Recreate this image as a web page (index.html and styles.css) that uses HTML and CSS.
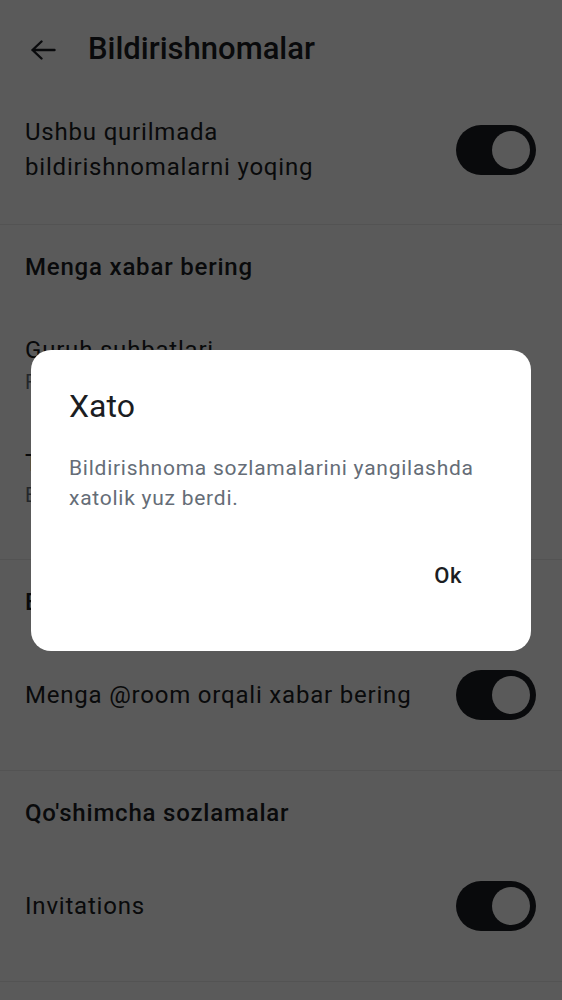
FILE: index.html
```html
<!DOCTYPE html>
<html lang="uz">
<head>
<meta charset="utf-8">
<title>Bildirishnomalar</title>
<link rel="stylesheet" href="styles.css">
</head>
<body>
<div class="page">
  <header class="topbar">
    <span class="back">
      <svg width="26" height="20" viewBox="0 0 26 20" aria-hidden="true">
        <path d="M2.5 10H24.5M11.5 1.5L2.5 10L11.5 18.5" fill="none" stroke="#1b1d22" stroke-width="2.4" stroke-linecap="round" stroke-linejoin="round"/>
      </svg>
    </span>
    <h1 class="title">Bildirishnomalar</h1>
  </header>

  <section class="section first">
    <div class="row">
      <div class="row-text two-line">Ushbu qurilmada<br>bildirishnomalarni yoqing</div>
      <span class="switch"><span class="thumb"></span></span>
    </div>
  </section>

  <section class="section">
    <div class="section-title">Menga xabar bering</div>
    <div class="item">
      <div class="item-title">Guruh suhbatlari</div>
      <div class="item-sub">Faqat eslatmalar va kalit so'zlar</div>
    </div>
    <div class="item">
      <div class="item-title">To'g'ridan-to'g'ri suhbatlar</div>
      <div class="item-sub">Barcha xabarlar</div>
    </div>
  </section>

  <section class="section">
    <div class="section-title">Belgilashlar</div>
    <div class="row">
      <div class="row-text">Menga @room orqali xabar bering</div>
      <span class="switch"><span class="thumb"></span></span>
    </div>
  </section>

  <section class="section">
    <div class="section-title">Qo'shimcha sozlamalar</div>
    <div class="row">
      <div class="row-text">Invitations</div>
      <span class="switch"><span class="thumb"></span></span>
    </div>
  </section>
</div>

<div class="scrim">
  <div class="dialog" role="alertdialog">
    <h2 class="dialog-title">Xato</h2>
    <p class="dialog-body">Bildirishnoma sozlamalarini yangilashda xatolik yuz berdi.</p>
    <div class="dialog-actions">
      <button class="dialog-btn">Ok</button>
    </div>
  </div>
</div>
</body>
</html>
```

FILE: styles.css
```css
html, body {
  margin: 0;
  padding: 0;
  background: #ffffff;
}

body {
  font-family: Roboto, "Noto Sans", "Liberation Sans", sans-serif;
  color: #1b1d22;
  width: 562px;
  height: 1000px;
  overflow: hidden;
}

.page {
  display: flex;
  flex-direction: column;
}

.topbar {
  height: 100px;
  display: flex;
  align-items: center;
  padding-left: 30px;
  box-sizing: border-box;
}

.back {
  display: flex;
  width: 26px;
  height: 20px;
  margin-right: 32px;
}

.title {
  margin: 0;
  font-size: 31px;
  font-weight: 500;
  line-height: 36px;
  padding-bottom: 2px;
}

.section {
  border-bottom: 1px solid #ebebeb;
  padding-bottom: 24px;
}

.row {
  display: flex;
  align-items: center;
  justify-content: space-between;
  padding: 26px 26px 26px 25px;
}

.section.first .row {
  padding-top: 15px;
  padding-bottom: 15px;
}

.row-text {
  font-size: 24px;
  line-height: 35px;
  letter-spacing: 0.8px;
}

.switch {
  flex: none;
  width: 80px;
  height: 50px;
  border-radius: 25px;
  background: #1b1d22;
  display: flex;
  align-items: center;
  justify-content: flex-end;
  padding-right: 6px;
  box-sizing: border-box;
}

.thumb {
  width: 38px;
  height: 38px;
  border-radius: 50%;
  background: #ffffff;
}

.section-title {
  height: 84px;
  display: flex;
  align-items: center;
  padding-left: 25px;
  font-size: 24px;
  font-weight: 500;
  letter-spacing: 0.8px;
}

.item {
  padding: 26px 25px 26px 25px;
}

.item-title {
  font-size: 24px;
  line-height: 30px;
  letter-spacing: 0.8px;
}

.item-sub {
  margin-top: 3px;
  font-size: 20px;
  line-height: 28px;
  color: #656d77;
  letter-spacing: 0.4px;
}

.scrim {
  position: fixed;
  inset: 0;
  background: rgba(0, 0, 0, 0.647);
  display: flex;
  align-items: center;
  justify-content: center;
}

.dialog {
  width: 500px;
  box-sizing: border-box;
  background: #ffffff;
  border-radius: 20px;
  padding: 36px 38px 51px 38px;
}

.dialog-title {
  margin: 0;
  font-size: 32px;
  font-weight: 400;
  line-height: 40px;
  color: #1b1d22;
}

.dialog-body {
  margin: 27px 0 0 0;
  font-size: 21px;
  line-height: 30px;
  color: #656d77;
  letter-spacing: 0.75px;
}

.dialog-actions {
  display: flex;
  justify-content: flex-end;
  margin-top: 39px;
}

.dialog-btn {
  font-family: inherit;
  font-size: 22px;
  font-weight: 500;
  line-height: 48px;
  height: 48px;
  padding: 0 31px 0 24px;
  margin: 0;
  border: 0;
  background: transparent;
  color: #1b1d22;
  letter-spacing: 0.5px;
}
```
